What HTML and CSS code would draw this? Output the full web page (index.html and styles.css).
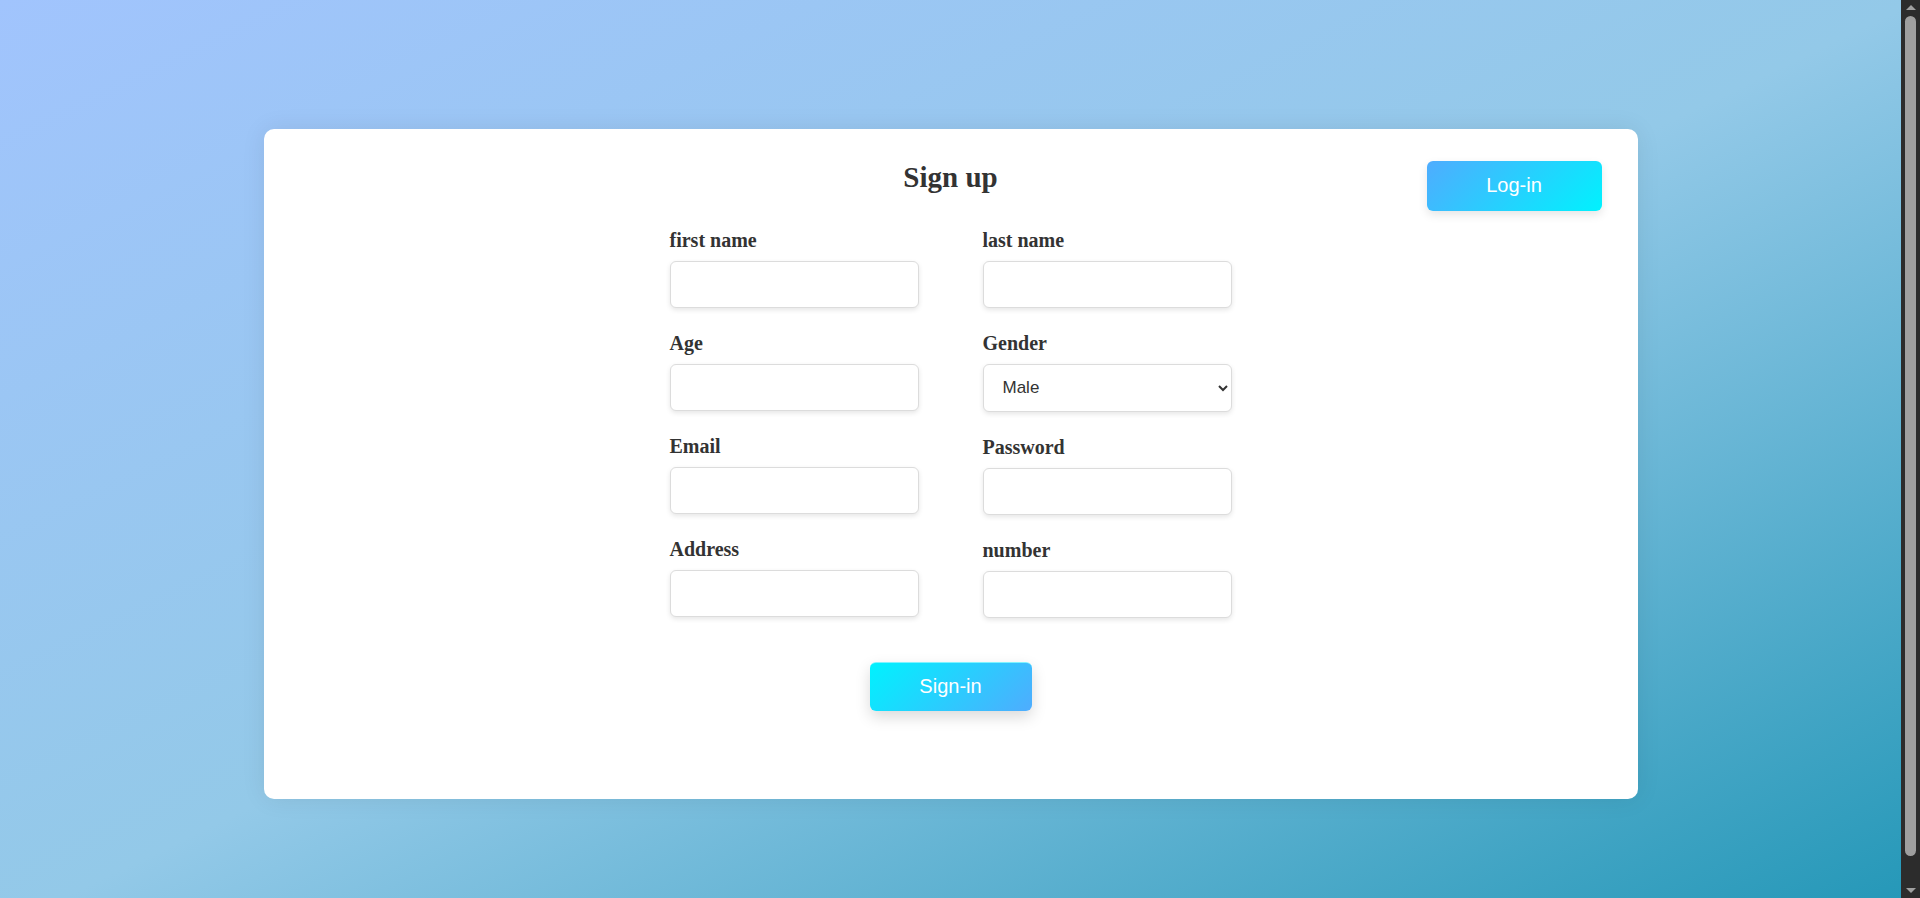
FILE: index.html
```html
<!DOCTYPE html>
<html lang="en">
<head>
<meta charset="UTF-8">
<title>Sign up</title>
<link rel="stylesheet" href="styles.css">
</head>
<body>
  <div class="card">
    <div class="card-header">
      <div class="spacer"></div>
      <h1 class="title">Sign up</h1>
      <button class="btn btn-login" type="button">Log-in</button>
    </div>
    <form class="form">
      <div class="columns">
        <div class="column">
          <div class="field">
            <label class="label">first name</label>
            <input class="input" type="text">
          </div>
          <div class="field">
            <label class="label">Age</label>
            <input class="input" type="text">
          </div>
          <div class="field">
            <label class="label">Email</label>
            <input class="input" type="email">
          </div>
          <div class="field">
            <label class="label">Address</label>
            <input class="input" type="text">
          </div>
        </div>
        <div class="column">
          <div class="field">
            <label class="label">last name</label>
            <input class="input" type="text">
          </div>
          <div class="field">
            <label class="label">Gender</label>
            <select class="input select">
              <option>Male</option>
              <option>Female</option>
            </select>
          </div>
          <div class="field">
            <label class="label">Password</label>
            <input class="input" type="password">
          </div>
          <div class="field">
            <label class="label">number</label>
            <input class="input" type="text">
          </div>
        </div>
      </div>
      <div class="actions">
        <button class="btn btn-signin" type="button">Sign-in</button>
      </div>
    </form>
  </div>
  <div class="scrollbar" aria-hidden="true">
    <div class="sb-arrow sb-up"></div>
    <div class="sb-track"><div class="sb-thumb"></div></div>
    <div class="sb-arrow sb-down"></div>
  </div>
</body>
</html>
```

FILE: styles.css
```css
html {
  margin: 0;
  padding: 0;
}

body {
  margin: 0;
  padding: 15px 34px 15px 15px;
  min-height: 100vh;
  display: flex;
  align-items: center;
  justify-content: center;
  background: linear-gradient(to bottom right, #a1c4fd 0%, #93c9e8 50%, #2196b6 100%);
  font-family: "Liberation Serif", "Times New Roman", serif;
  color: #333;
}

.card {
  width: 1374px;
  box-sizing: border-box;
  background: #ffffff;
  border-radius: 10px;
  box-shadow: 0 0 25px rgba(0, 0, 0, 0.08);
  padding: 32px 36px 88.5px;
}

.card-header {
  display: grid;
  grid-template-columns: 1fr auto 1fr;
  align-items: start;
}

.title {
  margin: 0;
  font-size: 29px;
  font-weight: bold;
  line-height: normal;
  color: #333;
  text-align: center;
}

.btn {
  font-family: "Liberation Sans", Arial, sans-serif;
  font-size: 20px;
  color: #ffffff;
  border: none;
  border-radius: 6px;
  cursor: pointer;
}

.btn-login {
  justify-self: end;
  width: 175px;
  height: 50px;
  background: linear-gradient(135deg, #4facfe 0%, #00f2fe 100%);
  box-shadow: 0 4px 10px rgba(0, 0, 0, 0.1);
}

.form {
  margin-top: 18px;
}

.columns {
  display: flex;
  justify-content: center;
  gap: 64px;
}

.column {
  width: 249px;
  display: flex;
  flex-direction: column;
  gap: 24px;
}

.field {
  display: flex;
  flex-direction: column;
}

.label {
  display: block;
  font-size: 20px;
  font-weight: bold;
  line-height: normal;
  color: #333;
  margin-bottom: 9px;
}

.input {
  box-sizing: border-box;
  width: 249px;
  height: 47px;
  margin: 0;
  padding: 0 15px;
  border: 1px solid #dcdcdc;
  border-radius: 6px;
  background: #ffffff;
  box-shadow: 0 2px 5px rgba(0, 0, 0, 0.1);
  font-family: "Liberation Sans", Arial, sans-serif;
  font-size: 17px;
  color: #333;
  outline: none;
}

.select {
  height: 48px;
  padding: 0 6px 0 15px;
}

.actions {
  display: flex;
  justify-content: center;
  margin-top: 44px;
}

.btn-signin {
  width: 162px;
  height: 49px;
  background: linear-gradient(135deg, #00f2fe 0%, #4facfe 100%);
  border-top: 1px solid #7ff3ff;
  box-shadow: 0 6px 15px rgba(0, 0, 0, 0.15);
}

.scrollbar {
  position: fixed;
  top: 0;
  right: 0;
  width: 19px;
  height: 100vh;
  background: #2c2c2c;
  display: flex;
  flex-direction: column;
  align-items: center;
}

.sb-arrow {
  width: 0;
  height: 0;
  border-left: 5px solid transparent;
  border-right: 5px solid transparent;
}

.sb-up {
  margin: 5px 0 6px;
  border-bottom: 5px solid #a0a0a0;
}

.sb-down {
  margin: 6px 0 5px;
  border-top: 5px solid #a0a0a0;
}

.sb-track {
  flex: 1;
  width: 100%;
  display: flex;
  justify-content: center;
  padding-bottom: 26px;
  box-sizing: border-box;
}

.sb-thumb {
  width: 11px;
  height: 100%;
  background: #9f9f9f;
  border-radius: 6px;
}
```
